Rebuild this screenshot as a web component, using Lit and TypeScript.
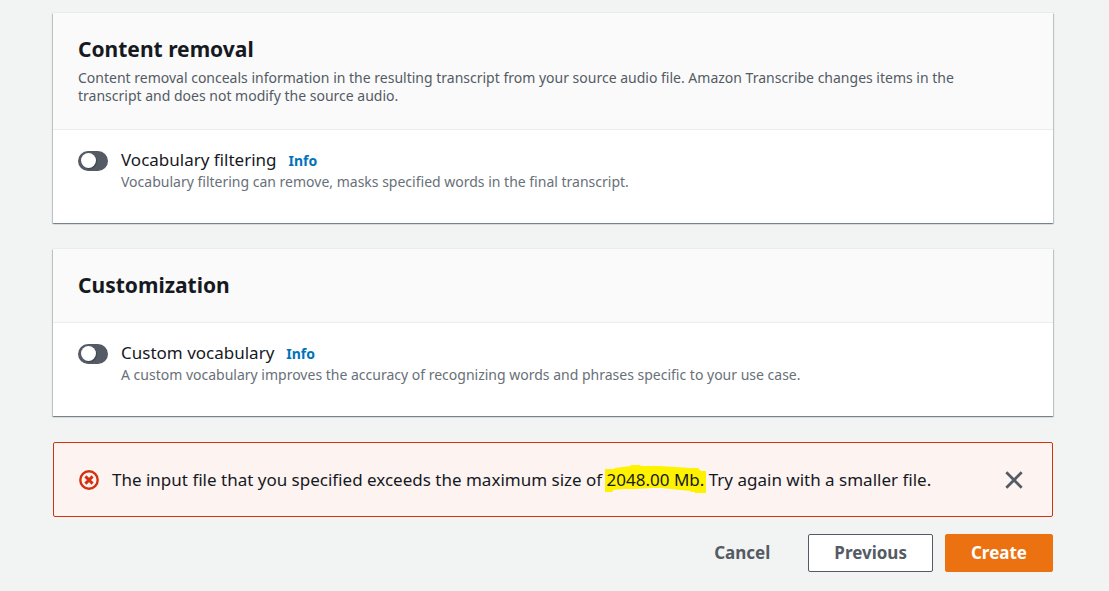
import { LitElement, html, css } from "lit";
import { customElement, property } from "lit/decorators.js";

@customElement("option-toggle")
export class OptionToggle extends LitElement {
  @property() label = "";
  @property() description = "";

  static styles = css`
    :host { display: grid; grid-template-columns: 30px 1fr; column-gap: 13px; }
    .switch {
      appearance: none; box-sizing: border-box; width: 30px; height: 20px; margin: 2px 0 0;
      padding: 2px 3px; border-radius: 10px; background: #545b64; cursor: pointer;
    }
    .switch::before {
      content: ""; display: block; width: 15px; height: 15px; border-radius: 50%;
      background: #fff; box-shadow: 1px 1px 1px rgba(0, 0, 0, 0.25);
    }
    .switch:checked { background: #0073bb; }
    .switch:checked::before { margin-left: 9px; }
    .line { display: flex; align-items: baseline; gap: 12px; }
    .label { font-size: 17px; line-height: 22px; color: #16191f; }
    .info { font-size: 14px; line-height: 22px; font-weight: 700; color: #0073bb; text-decoration: none; }
    .description { margin: 0; font-size: 14px; line-height: 20px; color: #687078; }
  `;

  render() {
    return html`
      <input class="switch" id="toggle" type="checkbox" role="switch" aria-describedby="description" />
      <div>
        <div class="line">
          <label class="label" for="toggle">${this.label}</label>
          <a class="info" href="#info">Info</a>
        </div>
        <p class="description" id="description">${this.description}</p>
      </div>
    `;
  }
}

@customElement("form-panel")
export class FormPanel extends LitElement {
  @property() heading = "";
  @property() description = "";

  static styles = css`
    :host {
      display: block; background: #fff;
      box-shadow: 0 1px 1px 0 rgba(0, 28, 36, 0.3), 1px 1px 1px 0 rgba(0, 28, 36, 0.15), -1px 1px 1px 0 rgba(0, 28, 36, 0.15), 0 0 0 1px rgba(0, 28, 36, 0.03);
    }
    .header { padding: 22px 25px; background: #fafafa; border-bottom: 1px solid #eaeded; }
    .heading { margin: 0; font-size: 21px; line-height: 29px; font-weight: 700; color: #16191f; }
    .description { margin: 5px 0 2px; max-width: 940px; font-size: 14px; line-height: 18px; color: #545b64; }
    .content { padding: 19px 25px 31px; }
  `;

  render() {
    return html`
      <header class="header">
        <h2 class="heading">${this.heading}</h2>
        ${this.description ? html`<p class="description">${this.description}</p>` : null}
      </header>
      <div class="content"><slot></slot></div>
    `;
  }
}

@customElement("app-root")
export class AppRoot extends LitElement {
  static styles = css`
    :host {
      display: block; box-sizing: border-box; min-height: 100vh; padding: 13px 56px 19px 53px;
      background: #f2f3f3; color: #16191f; font-family: "Noto Sans", "Open Sans", sans-serif;
    }
    .form { display: flex; flex-direction: column; gap: 26px; }
    .alert {
      display: flex; align-items: center; gap: 13px; padding: 25px; border: 1px solid #d13212;
      border-radius: 2px; background: #fdf3f1; font-size: 17px; line-height: 23px;
    }
    .icon { flex: none; width: 20px; height: 20px; }
    .message { flex: 1; margin: 0; }
    .size { position: relative; z-index: 0; background: none; color: inherit; white-space: nowrap; }
    .marker { position: absolute; z-index: -1; left: -2px; top: -3px; width: calc(100% + 4px); height: 28px; }
    .dismiss { display: flex; flex: none; padding: 0 4px; border: 0; background: none; cursor: pointer; }
    .cross { width: 18px; height: 18px; }
    .actions { display: flex; justify-content: flex-end; gap: 12px; margin-top: 17px; }
    .button {
      box-sizing: border-box; height: 38px; padding: 0 25px; border: 1px solid transparent; border-radius: 2px;
      background: transparent; color: #545b64; font: 700 17px/22px "Noto Sans", "Open Sans", sans-serif; cursor: pointer;
    }
    .normal { border-color: #545b64; background: #fff; }
    .primary { border-color: #ec7211; background: #ec7211; color: #fff; }
  `;

  render() {
    return html`
      <main>
        <div class="form">
          <form-panel
            heading="Content removal"
            description="Content removal conceals information in the resulting transcript from your source audio file. Amazon Transcribe changes items in the transcript and does not modify the source audio."
          >
            <option-toggle
              label="Vocabulary filtering"
              description="Vocabulary filtering can remove, masks specified words in the final transcript."
            ></option-toggle>
          </form-panel>
          <form-panel heading="Customization">
            <option-toggle
              label="Custom vocabulary"
              description="A custom vocabulary improves the accuracy of recognizing words and phrases specific to your use case."
            ></option-toggle>
          </form-panel>
          <div class="alert" role="alert">
            <svg class="icon" viewBox="0 0 20 20" fill="none" stroke="#d13212" aria-hidden="true">
              <circle cx="10" cy="10" r="8.7" stroke-width="2.4" />
              <path d="M6.4 6.4l7.2 7.2M13.6 6.4l-7.2 7.2" stroke-width="2.9" />
            </svg>
            <p class="message">
              The input file that you specified exceeds the maximum size of
              <mark class="size"><svg class="marker" viewBox="0 0 103 28" preserveAspectRatio="none" aria-hidden="true">
                <path fill="#fff200" d="M0 4H10V3L18 2L26 1V0H36V1H55L72 2L87 3H95V5H97V6H103V28H91V27H87V26L77 25L57 23H48L30 24H19L8 25V27H0Z" />
              </svg>2048.00 Mb.</mark>
              Try again with a smaller file.
            </p>
            <button class="dismiss" type="button" aria-label="Dismiss">
              <svg class="cross" viewBox="0 0 18 18" fill="none" stroke="#545b64" stroke-width="2.7" aria-hidden="true">
                <path d="M1.3 1.3l15.4 15.4M16.7 1.3L1.3 16.7" />
              </svg>
            </button>
          </div>
        </div>
        <div class="actions">
          <button class="button" type="button">Cancel</button>
          <button class="button normal" type="button">Previous</button>
          <button class="button primary" type="submit">Create</button>
        </div>
      </main>
    `;
  }
}
